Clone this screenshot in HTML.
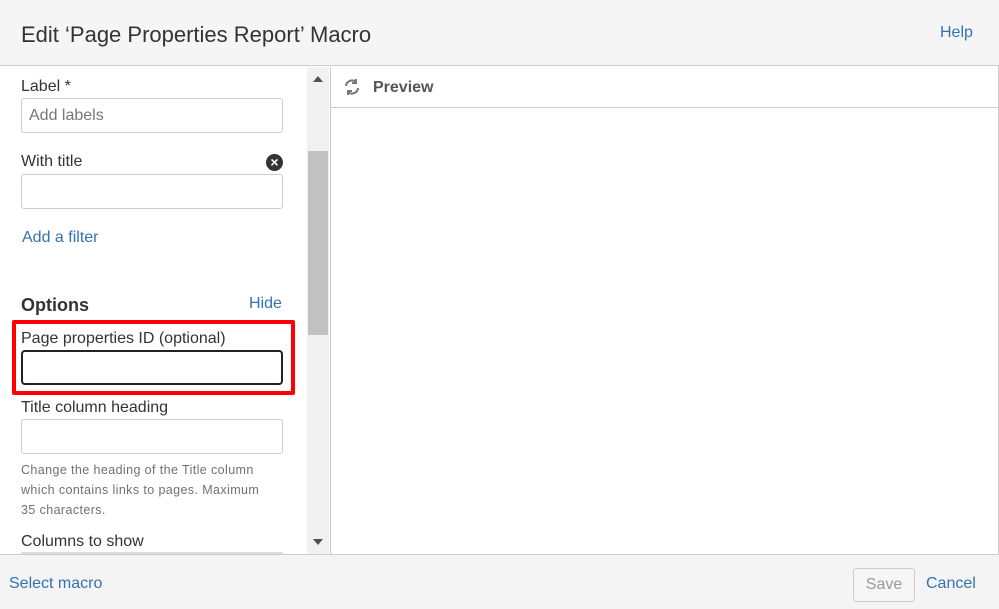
<!DOCTYPE html>
<html><head><style>
*{box-sizing:border-box;margin:0;padding:0}
body{width:999px;height:609px;position:relative;overflow:hidden;background:#fff;font-family:"Liberation Sans",sans-serif;color:#333}
.a{position:absolute}
.inp{position:absolute;left:21px;width:262px;height:35px;border:1px solid #ccc;border-radius:3px;background:#fff}
.lbl{position:absolute;left:21px;font-size:16px;color:#333}
.link{color:#3572b0}
</style></head><body>
<div class="a" style="left:0;top:0;width:999px;height:66px;background:#f5f5f5;border-bottom:1px solid #ccc"></div>
<div class="a" style="left:21px;top:22px;font-size:22px;color:#333">Edit ‘Page Properties Report’ Macro</div>
<div class="a link" style="left:940px;top:24px;font-size:16px">Help</div>
<div class="a" style="left:998px;top:66px;width:1px;height:488px;background:#ccc"></div>

<div class="lbl" style="top:78px">Label *</div>
<div class="inp" style="top:98px"><span style="position:absolute;left:7px;top:8px;font-size:16px;color:#777">Add labels</span></div>
<div class="lbl" style="top:153px">With title</div>
<div class="a" style="left:266px;top:154px;width:17px;height:17px;border-radius:50%;background:#333;color:#fff;font-size:14px;font-weight:bold;line-height:17px;text-align:center">×</div>
<div class="inp" style="top:174px"></div>
<div class="a link" style="left:22px;top:229px;font-size:16px">Add a filter</div>
<div class="a" style="left:21px;top:295px;font-size:18px;font-weight:bold;color:#333">Options</div>
<div class="a link" style="left:249px;top:295px;font-size:16px">Hide</div>
<div class="a" style="left:12px;top:320px;width:283px;height:75px;border:4px solid #f00;border-radius:2px"></div>
<div class="lbl" style="top:330px">Page properties ID (optional)</div>
<div class="a" style="left:21px;top:350px;width:262px;height:35px;border:2px solid #222;border-radius:4px"></div>
<div class="lbl" style="top:399px">Title column heading</div>
<div class="inp" style="top:419px"></div>
<div class="a" style="left:21px;top:460px;font-size:12.5px;line-height:20px;color:#707070;width:250px;letter-spacing:0.4px">Change the heading of the Title column which contains links to pages. Maximum 35 characters.</div>
<div class="lbl" style="top:533px">Columns to show</div>
<div class="a" style="left:21px;top:552px;width:262px;height:2px;background:#ddd"></div>

<div class="a" style="left:307px;top:67px;width:22px;height:487px;background:#f1f1f1"></div>
<div class="a" style="left:308px;top:151px;width:20px;height:184px;background:#c1c1c1"></div>
<div class="a" style="left:313px;top:76px;border-left:5px solid transparent;border-right:5px solid transparent;border-bottom:6px solid #505050"></div>
<div class="a" style="left:313px;top:539px;border-left:5px solid transparent;border-right:5px solid transparent;border-top:6px solid #505050"></div>
<div class="a" style="left:330px;top:67px;width:1px;height:487px;background:#ccc"></div>
<div class="a" style="left:331px;top:107px;width:667px;height:1px;background:#ccc"></div>
<svg class="a" style="left:343px;top:78px" width="18" height="18" viewBox="0 0 18 18" fill="none" stroke="#777" stroke-width="2"><path d="M3 8a6 6 0 0 1 10-4"/><path d="M15 10a6 6 0 0 1-10 4"/><path d="M13 1v4h-4" /><path d="M5 17v-4h4"/></svg>
<div class="a" style="left:373px;top:79px;font-size:16px;font-weight:bold;color:#555">Preview</div>

<div class="a" style="left:0;top:554px;width:999px;height:55px;background:#f4f4f4;border-top:1px solid #ccc"></div>
<div class="a link" style="left:9px;top:575px;font-size:16px">Select macro</div>
<div class="a" style="left:853px;top:568px;width:62px;height:34px;border:1px solid #ccc;border-radius:3px;background:#f6f6f6;color:#999;font-size:16px;text-align:center;line-height:32px">Save</div>
<div class="a link" style="left:926px;top:575px;font-size:16px">Cancel</div>
</body></html>
